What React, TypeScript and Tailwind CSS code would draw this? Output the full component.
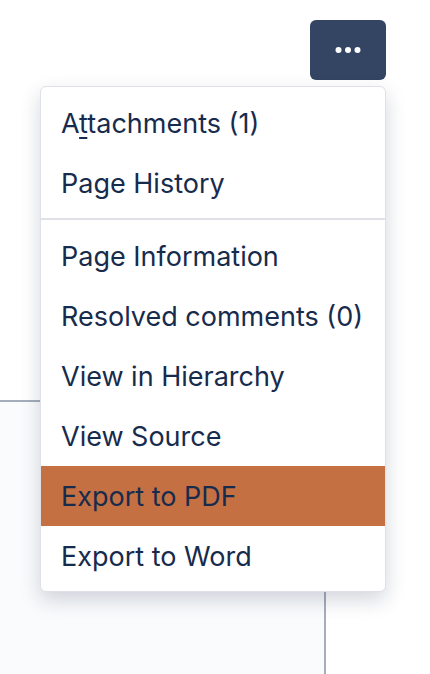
const firstGroup = ['Page History']
const secondGroup = [
  'Page Information',
  'Resolved comments (0)',
  'View in Hierarchy',
  'View Source',
  'Export to PDF',
  'Export to Word',
]

function MenuItem({ label, active }: { label: React.ReactNode; active?: boolean }) {
  return (
    <div
      className={
        'h-[60px] flex items-center pl-5 pr-4 whitespace-nowrap ' +
        (active ? 'bg-[#c57042]' : 'bg-white')
      }
    >
      {label}
    </div>
  )
}

export default function App() {
  return (
    <div className="relative w-[430px] h-[674px] overflow-hidden bg-white font-['Inter',sans-serif] text-[#172b4d]">
      {/* page content behind the menu */}
      <div className="absolute left-0 top-[400px] w-[326px] h-[300px] bg-[#fafbfc] border-t-2 border-r-2 border-[#a5adba]" />

      {/* more actions button */}
      <div className="flex justify-end pt-5 pr-[44px]">
        <button className="w-[76px] h-[60px] rounded-md bg-[#344563] flex items-center justify-center">
          <svg width="26" height="8" viewBox="0 0 26 8" fill="#fff">
            <circle cx="3.5" cy="4" r="3" />
            <circle cx="13" cy="4" r="3" />
            <circle cx="22.5" cy="4" r="3" />
          </svg>
        </button>
      </div>

      {/* dropdown menu */}
      <div className="absolute left-10 top-[86px] w-[346px] rounded-md border border-[#dfe1e6] bg-white shadow-[0_8px_20px_rgba(9,30,66,0.18)] overflow-hidden text-[27px] leading-none">
        <div className="pt-[6px] pb-[5px]">
          <MenuItem
            label={
              <span>
                A<span className="underline underline-offset-[4px] decoration-[2px]">t</span>tachments (1)
              </span>
            }
          />
          {firstGroup.map(l => (
            <MenuItem key={l} label={l} />
          ))}
        </div>
        <div className="h-[2px] bg-[#dfe1e6]" />
        <div className="pt-[6px] pb-[5px]">
          {secondGroup.map(l => (
            <MenuItem key={l} label={l} active={l === 'Export to PDF'} />
          ))}
        </div>
      </div>
    </div>
  )
}
